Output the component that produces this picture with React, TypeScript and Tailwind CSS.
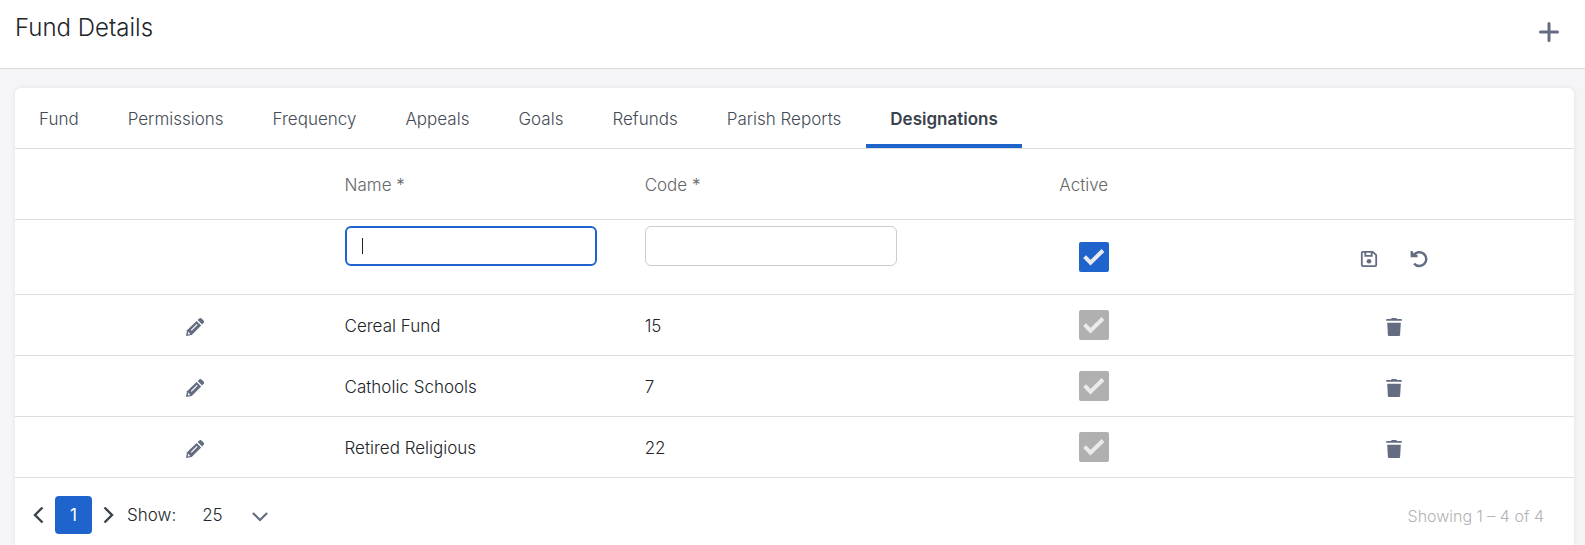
import React from "react";

interface Designation {
  name: string;
  code: string;
}

const tabs = [
  "Fund",
  "Permissions",
  "Frequency",
  "Appeals",
  "Goals",
  "Refunds",
  "Parish Reports",
  "Designations",
];

const activeTab = "Designations";

const designations: Designation[] = [
  { name: "Cereal Fund", code: "15" },
  { name: "Catholic Schools", code: "7" },
  { name: "Retired Religious", code: "22" },
];

const PlusIcon = () => (
  <svg width="20" height="20" viewBox="0 0 20 20" stroke="currentColor" strokeWidth="3" strokeLinecap="round">
    <path d="M10 1.5v17M1.5 10h17" />
  </svg>
);

const PencilIcon = () => (
  <svg width="18" height="18" viewBox="0 0 18 18" fill="currentColor">
    <path d="M1 12.2 10.6 2.9l4.6 4.6L5.7 17 0 18z" />
    <path d="M11.6 2 13 .7a2 2 0 0 1 2.8 0l1.6 1.6a2 2 0 0 1 0 2.8L16.1 6.5z" />
    <path d="M5.2 12.3 11.2 6.3" stroke="#fff" strokeWidth="1.2" />
    <path d="m1.9 13.6 2.4 2.5-2.1.4z" fill="#fff" />
  </svg>
);

const TrashIcon = () => (
  <svg width="16" height="18" viewBox="0 0 16 18" fill="currentColor">
    <path d="M5 .9Q5.3 0 6.2 0h3.6q.9 0 1.2.9h4.4q.4 0 .4.6v1.300H.2V1.500q0-.6.4-.6z" />
    <path d="M1.200 4.700h13.600l-.7 12.300q-.1 1-1.100 1H3q-1 0-1.100-1z" />
  </svg>
);

const SaveIcon = () => (
  <svg width="18" height="18" viewBox="0 0 18 18" fill="none" stroke="currentColor" strokeWidth="1.8">
    <path d="M3 1.8h9.800l3.400 3.300V15q0 1.200-1.200 1.200H3q-1.200 0-1.200-1.200V3Q1.800 1.800 3 1.800z" />
    <path d="M5.300 1.800v4h6.400v-4" />
    <circle cx="9" cy="11.300" r="2.300" fill="currentColor" stroke="none" />
  </svg>
);

const UndoIcon = () => (
  <svg width="18" height="18" viewBox="0 0 18 18" fill="none">
    <path d="M3.600 5.300a6.900 6.900 0 1 1 .5 8.300" stroke="currentColor" strokeWidth="2.400" />
    <path d="M.6 1h1.800l1.300 2.400 3.900 1.600v2.200H.6z" fill="currentColor" />
  </svg>
);

const Chevron = ({ d, size }: { d: string; size: string }) => (
  <svg className={size} viewBox="0 0 18 18" fill="none" stroke="currentColor" strokeWidth="2.4">
    <path d={d} />
  </svg>
);

const ActiveBox = ({ label, disabled = false }: { label: string; disabled?: boolean }) => (
  <span className="inline-grid place-items-center align-middle">
    <input
      type="checkbox"
      aria-label={label}
      defaultChecked
      disabled={disabled}
      className="col-start-1 row-start-1 size-[30px] appearance-none rounded-xs bg-[#1f64cc] disabled:bg-[#b0b0b0]"
    />
    <svg
      className="pointer-events-none col-start-1 row-start-1 size-[22px] text-[#ebebed]"
      viewBox="0 0 22 22"
      fill="none"
      stroke="currentColor"
      strokeWidth="4"
    >
      <path d="m1.600 10.600 5.900 6L20 4.500" />
    </svg>
  </span>
);

const App: React.FC = () => {
  return (
    <div className="flex min-h-screen flex-col bg-[#f5f5f7] font-['Inter',sans-serif] text-[17px] leading-6 font-light text-[#212529]">
      <header className="flex h-[69px] items-start justify-between border-b border-[#dcdcdf] bg-white pr-[26px] pl-[15px]">
        <h1 className="pt-3 text-2xl leading-8">Fund Details</h1>
        <button type="button" aria-label="Add designation" className="mt-[22px] text-[#636c80]">
          <PlusIcon />
        </button>
      </header>

      <main className="mt-[19px] mr-[11px] ml-[15px] flex-1 rounded-t-md bg-white shadow-[0_0_5px_rgba(0,0,0,0.08)]">
        <nav className="flex h-[61px] gap-px border-b border-[#dedee0]">
          {tabs.map((tab) => (
            <button
              key={tab}
              type="button"
              className={
                tab === activeTab
                  ? "border-b-4 border-[#1f64cc] px-6 pt-1.5 font-semibold text-[#3a424c]"
                  : "border-b-4 border-transparent px-6 pt-1.5 text-[#454c55]"
              }
            >
              {tab}
            </button>
          ))}
        </nav>

        <table className="w-full table-fixed border-separate border-spacing-0 [&_td]:border-b [&_td]:border-[#dedee0] [&_th]:border-b [&_th]:border-[#dedee0]">
          <colgroup>
            <col className="w-[19.6%]" />
            <col className="w-[19.25%]" />
            <col className="w-[19.25%]" />
            <col className="w-[22.2%]" />
            <col />
          </colgroup>
          <thead>
            <tr className="h-[71px] text-[#666666]">
              <th />
              <th className="px-6 pt-0.5 text-left font-light">Name *</th>
              <th className="px-6 pt-0.5 text-left font-light">Code *</th>
              <th className="pt-0.5 pr-5 text-center font-light">Active</th>
              <th />
            </tr>
          </thead>
          <tbody>
            <tr className="h-[75px]">
              <td />
              <td className="px-6 pt-1.5 align-top">
                <div className="relative">
                  <input
                    type="text"
                    aria-label="Name"
                    className="block h-10 w-full rounded-md border-2 border-[#1f64cc] px-4 caret-transparent outline-none"
                  />
                  <span className="pointer-events-none absolute inset-y-3 left-[17px] w-px bg-[#212529]" />
                </div>
              </td>
              <td className="px-6 pt-1.5 align-top">
                <input
                  type="text"
                  aria-label="Code"
                  className="block h-10 w-full rounded-md border border-[#cccccc] px-4 outline-none"
                />
              </td>
              <td className="text-center">
                <ActiveBox label="Active" />
              </td>
              <td className="pr-[52px]">
                <div className="flex justify-center gap-8 pt-1 text-[#636c80]">
                  <button type="button" aria-label="Save">
                    <SaveIcon />
                  </button>
                  <button type="button" aria-label="Undo">
                    <UndoIcon />
                  </button>
                </div>
              </td>
            </tr>
            {designations.map((item) => (
              <tr key={item.code} className="h-[61px]">
                <td className="pl-[54px]">
                  <div className="flex justify-center pt-1 text-[#636c80]">
                    <button type="button" aria-label={`Edit ${item.name}`}>
                      <PencilIcon />
                    </button>
                  </div>
                </td>
                <td className="px-6 pt-0.5">{item.name}</td>
                <td className="px-6 pt-0.5">{item.code}</td>
                <td className="text-center">
                  <ActiveBox label={`${item.name} active`} disabled />
                </td>
                <td className="pr-[52px]">
                  <div className="flex justify-center pt-1 text-[#636c80]">
                    <button type="button" aria-label={`Delete ${item.name}`}>
                      <TrashIcon />
                    </button>
                  </div>
                </td>
              </tr>
            ))}
          </tbody>
        </table>

        <footer className="flex items-center justify-between pt-[18px] pr-[30px] pl-[15px]">
          <div className="flex items-center">
            <button type="button" aria-label="Previous page" className="text-[#3a424c]">
              <Chevron d="M12.5 1.5 5 9l7.5 7.5" size="size-[18px]" />
            </button>
            <button type="button" className="mx-[7px] h-[38px] w-[37px] rounded-sm bg-[#1f64cc] font-normal text-white">
              1
            </button>
            <button type="button" aria-label="Next page" className="text-[#3a424c]">
              <Chevron d="M5.5 1.5 13 9l-7.5 7.5" size="size-[18px]" />
            </button>
            <label htmlFor="page-size" className="ml-2.5">
              Show:
            </label>
            <div className="ml-[26px] grid items-center">
              <select id="page-size" className="col-start-1 row-start-1 w-[66px] appearance-none outline-none">
                <option>25</option>
                <option>50</option>
                <option>100</option>
              </select>
              <span className="pointer-events-none col-start-1 row-start-1 justify-self-end pt-0.5 text-[#636c80]">
                <Chevron d="m1 5.500 8 8 8-8" size="size-4" />
              </span>
            </div>
          </div>
          <p className="pt-0.5 text-base text-[#b0b2b5]">Showing 1 – 4 of 4</p>
        </footer>
      </main>
    </div>
  );
};

export default App;
